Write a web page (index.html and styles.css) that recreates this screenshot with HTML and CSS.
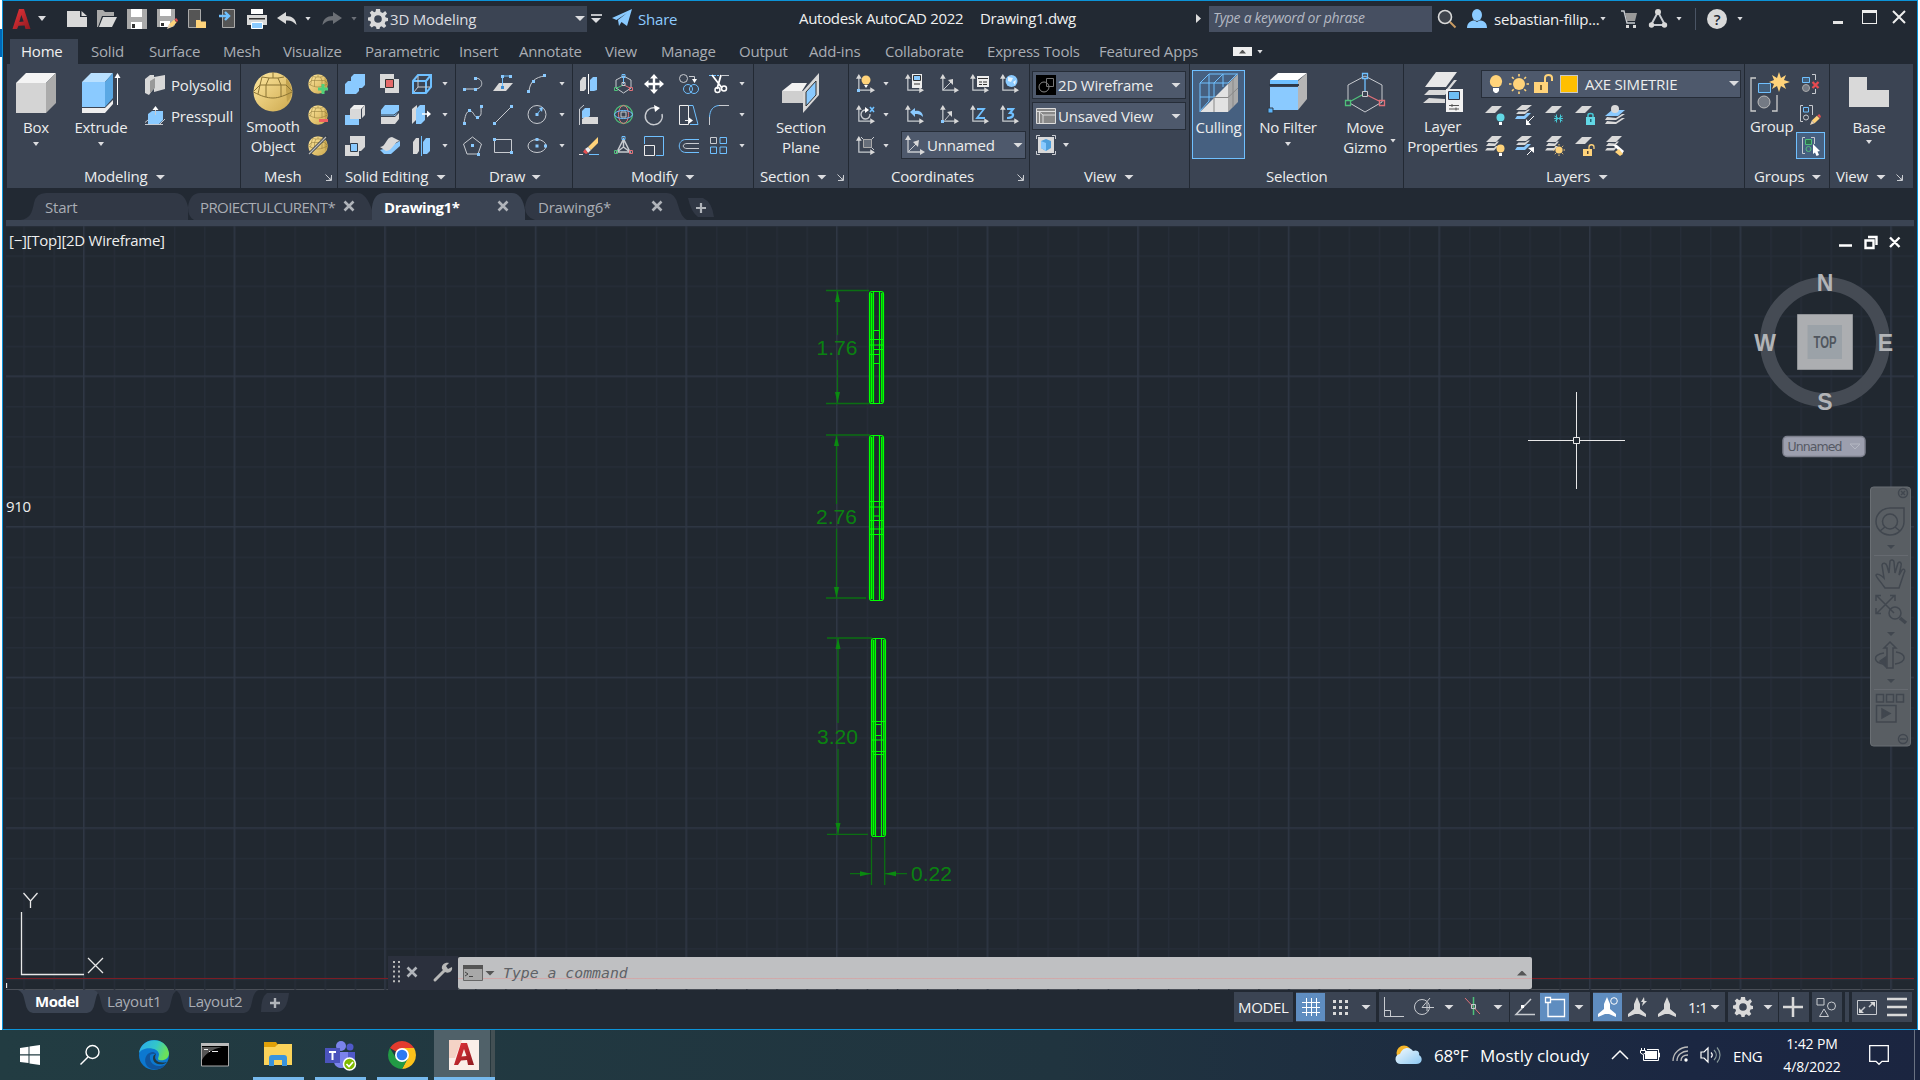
FILE: index.html
```html
<!DOCTYPE html>
<html lang="en">
<head>
<meta charset="utf-8">
<title>Autodesk AutoCAD 2022 - Drawing1.dwg</title>
<link rel="stylesheet" href="styles.css">
</head>
<body>
<svg class="defs" width="0" height="0">
  <defs>
    <linearGradient id="gold" x1="0" y1="0" x2="1" y2="1"><stop offset="0" stop-color="#ffe8a0"/><stop offset="1" stop-color="#cda94e"/></linearGradient>
    <linearGradient id="red" x1="0" y1="0" x2="1" y2="1"><stop offset="0" stop-color="#e8343a"/><stop offset="1" stop-color="#8f1a20"/></linearGradient>
    <linearGradient id="edgeA" x1="0" y1="0" x2="1" y2="0.3"><stop offset="0" stop-color="#2aa8ee"/><stop offset=".6" stop-color="#33c6c9"/><stop offset="1" stop-color="#6be05a"/></linearGradient>
    <linearGradient id="cloud" x1="0" y1="0" x2="1" y2="1"><stop offset="0" stop-color="#f4fbff"/><stop offset="1" stop-color="#8cc8f2"/></linearGradient>
    <symbol id="axis" viewBox="0 0 20 20"><path class="sw" stroke-width="1.3" d="M3 3V17H17"/><path class="fw" d="M0 5L3 0L6 5zM15 14L20 17L15 20z"/></symbol>
    <symbol id="sheet" viewBox="0 0 20 20"><path class="fw" d="M7 1H17L10 8H0z"/></symbol>
    <symbol id="sheets" viewBox="0 0 20 20"><path class="fw" d="M7 0H17L11 6H1zM3.500 7L1 10H10L14 5.500H12L10 7.500zM2 12L0 14.500H9L13 10H11L9 12z"/></symbol>
    <symbol id="sheets-blue" viewBox="0 0 20 20"><path class="fw" d="M7 0H17L11 5H1zM3.500 6.500L1 9H10L15 4.500H13L10 6.500z"/><path class="fb" d="M2 11L0 14H10L16 8H12L9 11z"/></symbol>
    <symbol id="ball" viewBox="0 0 40 40"><circle cx="20" cy="20" r="19.500" fill="url(#gold)"/><path fill="#c2a24e" d="M33 6C40 13 41 24 34 30L33 18z"/><path fill="none" stroke="#8b7434" stroke-width="1" d="M1 19L7 13H33L39 19M0.500 20C8 24 14 26 20 26S33 23 39 20M9 5L16 6H25L31 5M16 6L13 13V25M25 6L28 13V25M9 5L7 13L5 22M20 0V6"/></symbol>
    <symbol id="bulb" viewBox="0 0 14 20"><path class="fy" d="M7 1A6.500 6.500 0 0 1 10 13H4A6.500 6.500 0 0 1 7 1z"/><path fill="#fff" d="M4 14H10V17L8 19H6L4 17z"/></symbol>
    <symbol id="sun" viewBox="0 0 20 20"><circle class="fy" cx="10" cy="10" r="6"/><path class="sy" stroke-width="1.600" d="M10 0V2.500M10 17.500V20M0 10H2.500M17.500 10H20M3 3L4.700 4.700M15.300 15.300L17 17M17 3L15.300 4.700M4.700 15.300L3 17"/></symbol>
    <symbol id="gear" viewBox="0 0 20 20"><path class="fw" fill-rule="evenodd" d="M8 0H12L12.500 3L14.800 4L17.200 2L19 4.500L17 7L17.800 8.500L20 9V12L17.500 12.500L16.700 14.500L18.300 17L16 19L13.500 17.200L12 18L11.500 20H8.500L8 17.800L6 17L3.700 18.500L1.500 16.200L3 13.800L2.400 12L0 11.500V8.500L2.500 8L3.300 6L1.700 3.700L4 1.500L6.200 3.200L7.600 2.600zM10 6.200A3.800 3.800 0 1 0 10 13.800A3.800 3.800 0 1 0 10 6.200z"/></symbol>
    <symbol id="launch" viewBox="0 0 7 7"><path class="sw" d="M.5 .5L6 6M6.500 1V6.500H1M6 3.500V6H3.500"/></symbol>
    <symbol id="x" viewBox="0 0 12 12"><path fill="none" stroke="#b0b4ba" stroke-width="2.600" d="M1.500 1.500L10.500 10.500M10.500 1.500L1.500 10.500"/></symbol>
    <symbol id="pencil" viewBox="0 0 12 12"><path class="fy" d="M2 7L7.500 2L10.500 5L5 10z"/><path fill="#e05050" d="M8 1.500L10 0L12 2.500L11 4.500z"/><path fill="#e8d0b0" d="M2 7L0 12L5 10z"/></symbol>
  </defs>
</svg>
<div class="screen">
<div class="window">

  <header class="titlebar">
    <svg class="i" viewBox="0 0 20 20"><path fill="url(#red)" d="M6 0H11L17.500 20H12.500L11.600 16.500L5.500 16.800L4 20H-.5zM8.300 6L6.300 13L10.700 12.600z"/></svg>
    <i class="caret mid"></i>
    <svg class="i" viewBox="0 0 20 20"><path class="fw" d="M0 2H13V8H20V18H0zM14.500 2L20 7H14.500z"/></svg>
    <svg class="i" viewBox="0 0 20 20"><path fill="#aaa" d="M0 1H6L8 3H17V7H5L1 18H0z"/><path class="fw" d="M6 8H20L15 18H2z"/></svg>
    <svg class="i" viewBox="0 0 20 20"><path fill="#aaa" d="M0 0H20V20H0z"/><path fill="#fff" d="M4 0H15V8H4zM4 13H15V20H4z"/><path fill="#333" d="M5 15H8V19H5z"/></svg>
    <svg class="i" viewBox="0 0 20 20"><path fill="#aaa" d="M0 0H18V16L16 18H0z"/><path fill="#fff" d="M3 0H14V7H3zM3 12H13V18H3z"/><path fill="#333" d="M4 14H7V17H4z"/><use href="#pencil" x="10" y="9" width="11" height="11"/></svg>
    <svg class="i" viewBox="0 0 20 20"><path fill="#555" stroke="#aaa" d="M1.500 .5H13.500V18.500H1.500z"/><path class="fy" d="M9 11H13L14 12.500H19V19H9z"/></svg>
    <svg class="i" viewBox="0 0 20 20"><path fill="#555" stroke="#aaa" d="M4.500 .5H16.500V18.500H4.500z"/><path class="sb" stroke-width="2.400" d="M1 7H10M7 3L11 7L7 11"/></svg>
    <svg class="i" viewBox="0 0 20 20"><path fill="#fff" d="M4 0H16V5H4z"/><path class="fw" d="M0 6H20V16H0z"/><path fill="#333" d="M2 9H18V10.500H2z"/><path class="fb" stroke="#fff" d="M4.500 13.500H15.500V19.500H4.500z"/></svg>
    <svg class="i" viewBox="0 0 20 20"><path class="fw" d="M0 9L9 3V7C15 7 19 10 19.500 16C16 12 13 11 9 11.500V15z"/></svg>
    <i class="caret small"></i>
    <svg class="i dim" viewBox="0 0 20 20"><path class="fw" d="M20 9L11 3V7C5 7 1 10 .5 16C4 12 7 11 11 11.500V15z"/></svg>
    <i class="caret small dim"></i>
    <div class="workspace"><svg class="i" viewBox="0 0 20 20"><use href="#gear"/></svg><span>3D Modeling</span><i class="caret"></i></div>
    <div class="customize"><i class="caret"></i></div>
    <svg class="i" viewBox="0 0 20 20"><path class="fb" d="M0 9L20 0L15 17L9.500 13L7 17L6 11L15 4L4.500 11z"/></svg>
    <span class="share">Share</span>
    <span class="bright app-name">Autodesk AutoCAD 2022</span>
    <span class="bright doc-name">Drawing1.dwg</span>
    <i class="play"></i>
    <div class="search">Type a keyword or phrase</div>
    <svg class="i" viewBox="0 0 20 20"><circle cx="8" cy="8" r="6.500" fill="#3f444c" stroke="#d9d9d9" stroke-width="1.600"/><path stroke="#c89a62" stroke-width="2" d="M13 13L18.500 18.500"/></svg>
    <svg class="i" viewBox="0 0 20 20"><ellipse class="fb" cx="10" cy="6" rx="5" ry="6"/><path class="fb" d="M0 19C0 13 5 11.500 7.500 11.500L10 13L12.500 11.500C16 11.500 20 13 20 19z"/></svg>
    <span class="bright user">sebastian-filip...</span>
    <i class="caret small"></i>
    <svg class="i" viewBox="0 0 20 20"><path class="sw" stroke-width="1.400" d="M1 2H4L7 14H15"/><path fill="#999" d="M5 4H17L15 12H7z"/><path class="fw" d="M6 16H9V19H6zM13 16H16V19H13z"/></svg>
    <svg class="i" viewBox="0 0 20 20"><path class="sw" stroke-width="2" d="M10 3L3 16H17z"/><circle class="fw" cx="10" cy="3" r="3"/><circle class="fw" cx="3.500" cy="16" r="2.700"/><circle class="fw" cx="16.500" cy="16" r="2.700"/></svg>
    <i class="caret small"></i>
    <i class="divider"></i>
    <div class="help">?</div>
    <i class="caret small"></i>
    <i class="min"></i>
    <i class="max"></i>
    <svg class="close" viewBox="0 0 14 14"><path stroke="#eee" stroke-width="2" d="M1 1L13 13M13 1L1 13"/></svg>
  </header>

  <nav class="menu">
    <a class="on">Home</a><a>Solid</a><a>Surface</a><a>Mesh</a><a>Visualize</a><a>Parametric</a><a>Insert</a><a>Annotate</a><a>View</a><a>Manage</a><a>Output</a><a>Add-ins</a><a>Collaborate</a><a>Express Tools</a><a>Featured Apps</a>
    <b class="minimize"><i></i></b><i class="caret small"></i>
  </nav>

  <section class="ribbon">
    <div class="panel p-modeling">
      <div class="body">
        <div class="big"><svg viewBox="0 0 40 40"><path fill="#d4d4d4" d="M0 10H30V40H0z"/><path fill="#f4f4f4" d="M0 10L10 0H40L30 10z"/><path fill="#ababab" d="M30 10L40 0V30L30 40z"/></svg><span>Box</span><i class="caret small"></i></div>
        <div class="big"><svg viewBox="0 0 40 40"><path class="fb" d="M1 9H24V34H1z"/><path fill="#b9e0ff" d="M1 9L10 0H32L24 9z"/><path fill="#5aa8e4" d="M24 9L32 0V25L24 34z"/><path fill="#eee" d="M1 35H24L32 27V31L24 40H1z"/><path fill="none" stroke="#fff" d="M36.500 2V32"/><path fill="#fff" d="M33.500 5L36.500 0L39.500 5z"/></svg><span>Extrude</span><i class="caret small"></i></div>
        <div class="wide">
          <div><svg class="i" viewBox="0 0 20 20"><path fill="#d8d8d8" d="M0 4L5 0H9V13L4 20L0 18zM9 2L20 0V14L9 17z"/><path fill="#999" d="M5 6L10 3V13L5 18z"/></svg><span>Polysolid</span></div>
          <div><svg class="i" viewBox="0 0 20 20"><path class="fb" d="M3 8L7 5H18V14L14 18H3z"/><path class="sw" d="M0 18.500H18M0 16.500L3 14M15 18L20 13M10.500 9V1"/><path fill="#fff" d="M7.500 4L10.500 0L13.500 4z"/></svg><span>Presspull</span></div>
        </div>
      </div>
      <h2>Modeling<i class="caret"></i></h2>
    </div>

    <div class="panel p-mesh">
      <div class="body">
        <div class="big tight"><svg viewBox="0 0 40 40"><use href="#ball"/></svg><span>Smooth<br>Object</span></div>
        <div class="tools">
          <svg class="i" viewBox="0 0 20 20"><use href="#ball"/><path stroke="#4fd07a" stroke-width="3" d="M10 15H20M15 10V20"/></svg>
          <svg class="i" viewBox="0 0 20 20"><use href="#ball"/><path stroke="#f06060" stroke-width="3" d="M11 15.500H20"/></svg>
          <svg class="i" viewBox="0 0 20 20"><use href="#ball"/><path stroke="#333c48" stroke-width="3" d="M1 18L19 0"/><path stroke="#bbb" stroke-width="1.200" d="M1 18L18 1"/></svg>
        </div>
      </div>
      <h2>Mesh<svg class="launch"><use href="#launch"/></svg></h2>
    </div>

    <div class="panel p-solid">
      <div class="body"><div class="tools">
        <svg class="i" viewBox="0 0 20 20"><path class="fb" d="M0 10L3 7H6V3L9 0H20V11L17 14H14V17L11 20H0z"/></svg>
        <svg class="i" viewBox="0 0 20 20"><path class="fw" d="M0 0H14V5H19V19H5V14H0z"/><path fill="#e46a6a" stroke="#333" d="M5.500 5.500H13.500V13.500H5.500z"/></svg>
        <svg class="i" viewBox="0 0 20 20"><path class="sb" stroke-width="2" d="M1 7L6 1H19V13L14 19H1zM1 7H14V19M14 7L19 1"/><path class="sw" d="M6 2V13H18M6 13L2 18"/></svg><i class="caret small"></i>
        <svg class="i" viewBox="0 0 20 20"><path class="fb" d="M0 10H5V14H14V20H0z"/><path fill="#eee" d="M5 4L9 0H20L16 4z"/><path class="fw" d="M5 4H16V14H5zM17 4L20 0V10L17 13z"/></svg>
        <svg class="i" viewBox="0 0 20 20"><path class="fb" d="M1 5L5 0H19V6L15 11H1z"/><path stroke="#333c48" d="M1 10H14L19 6" fill="none"/><path class="fw" d="M1 12H15L19 8V14L15 19H1z"/></svg>
        <svg class="i" viewBox="0 0 20 20"><path class="fw" d="M0 4L5 0V14L0 19z"/><path class="fb" d="M4 4L8 0H13V15L9 19H4z"/><path stroke="#fff" stroke-width="1.500" d="M10 9H17"/><path fill="#fff" d="M15 5.500L19 9L15 12.500z"/></svg><i class="caret small"></i>
        <svg class="i" viewBox="0 0 20 20"><path class="fw" d="M5 0H20V11L16 15H14V20H0V9H5z"/><path class="fb" stroke="#333c48" d="M5.500 7.500H12.500V15.500H5.500z"/></svg>
        <svg class="i" viewBox="0 0 20 20"><path class="fb" d="M0 14L7 12L20 5V10L11 18L4 18z"/><path class="fw" d="M0 11C6 11 6 1 12 1L20 5C14 5 13 15 6 15z"/></svg>
        <svg class="i" viewBox="0 0 20 20"><path class="fw" d="M1 6L4 2H7V15L5 18H1z"/><path class="sb" d="M9.500 0V20"/><path class="fb" d="M11 6L14 2H18V15L15 18H11z"/></svg><i class="caret small"></i>
      </div></div>
      <h2>Solid Editing<i class="caret"></i></h2>
    </div>

    <div class="panel p-draw">
      <div class="body"><div class="tools">
        <svg class="i" viewBox="0 0 20 20"><path class="sw" d="M2 15H12M12 4C21 4 21 15 12 15"/><path class="fb" d="M0 14H3V17H0zM11 3H14V6H11zM11 14H14V17H11z"/></svg>
        <svg class="i" viewBox="0 0 20 20"><path class="fw" d="M6 9H20L13 17H0z"/><path class="sb" d="M9.500 13V2H18"/><path class="fb" d="M8 1H11V4H8zM16 1H19V4H16z"/><path fill="#3b8bd0" d="M8 12H11V15H8z"/></svg>
        <svg class="i" viewBox="0 0 20 20"><path class="sw" d="M2 17C3 8 8 3 18 2"/><path class="fb" d="M0 16H3V19H0zM5 6H8V9H5zM16 0H19V3H16z"/></svg><i class="caret small"></i>
        <svg class="i" viewBox="0 0 20 20"><path class="sw" d="M1 18C2 12 3 6 7 6S11 13 15 12S18 8 18 2"/><path class="fb" d="M0 17H3V20H0zM5 4H8V7H5zM13 11H16V14H13zM17 0H20V3H17z"/></svg>
        <svg class="i" viewBox="0 0 20 20"><path class="sw" d="M2 18L18 2"/><path class="fb" d="M0 17H3V20H0zM17 0H20V3H17z"/></svg>
        <svg class="i" viewBox="0 0 20 20"><circle class="sw" cx="10" cy="9.500" r="9"/><path class="fb" d="M8.500 8H11.500V11H8.500zM12 3L16 2L15 7z"/><path class="sb" d="M10 9L14 4.500"/></svg><i class="caret small"></i>
        <svg class="i" viewBox="0 0 20 20"><path class="sw" d="M9.500 1L18.500 8L15 18H4L.5 8z"/><path class="fb" d="M8 8H11V11H8zM14 17H17V20H14z"/></svg>
        <svg class="i" viewBox="0 0 20 20"><path class="sw" d="M1.500 3.500H18.500V16.500H1.500z"/><path class="fb" d="M0 2H3V5H0zM17 15H20V18H17z"/></svg>
        <svg class="i" viewBox="0 0 20 20"><ellipse class="sw" cx="10" cy="10" rx="9" ry="6.500"/><path class="fb" d="M8.500 2H11.500V5H8.500zM8.500 8.500H11.500V11.500H8.500zM17 8.500H20V11.500H17z"/></svg><i class="caret small"></i>
      </div></div>
      <h2>Draw<i class="caret"></i></h2>
    </div>

    <div class="panel p-modify">
      <div class="body"><div class="tools">
        <svg class="i" viewBox="0 0 20 20"><path class="fw" d="M1 7L4 3H7V15L5 17H1z"/><path stroke="#fff" d="M9.500 0V20"/><path class="fb" d="M11 6L14 3H18V16L15 17H11z"/></svg>
        <svg class="i" viewBox="0 0 20 20"><path class="sw" d="M9.500 2L17 6V14L9.500 19L2 14V6z"/><path class="sb" d="M9.500 2V10M8 .5H11V3.500H8z"/><path stroke="#4fc07a" fill="none" d="M9 11L3 14M.5 13.500H3.500V16.500H.5z"/><path class="sr" d="M10 11L16 14M15.500 13.500H18.500V16.500H15.500z"/><path class="sw" d="M8 8.500H11V11.500H8z"/></svg>
        <svg class="i" viewBox="0 0 20 20"><path fill="#fff" d="M10 0L14 4.500H11.200V8.800H15.500V6L20 10L15.500 14V11.200H11.200V15.500H14L10 20L6 15.500H8.800V11.200H4.500V14L0 10L4.500 6V8.800H8.800V4.500H6z"/></svg>
        <svg class="i" viewBox="0 0 20 20"><circle class="sw" cx="4.500" cy="4.500" r="4"/><path class="sw" d="M10 2.500H15.500V6"/><path fill="#fff" d="M13 5H18L15.500 9z"/><circle class="sb" cx="9" cy="15" r="4.500"/><circle class="sb" cx="15" cy="15" r="4.500"/></svg>
        <svg class="i" viewBox="0 0 20 20"><path class="sb" stroke-dasharray="3 1" d="M0 1.500H10"/><path class="sw" d="M13 1.500H20"/><path stroke="#fff" stroke-width="1.800" fill="none" d="M3 1L13 14M12 1L8 15"/><circle cx="8.500" cy="16" r="2.500" stroke="#fff" stroke-width="1.500" fill="none"/><circle cx="15" cy="14.500" r="2.500" stroke="#fff" stroke-width="1.500" fill="none"/></svg><i class="caret small"></i>
        <svg class="i" viewBox="0 0 20 20"><path class="sw" d="M.5 20V4L5 0"/><path class="fb" d="M3 6L6 3H11V11L8 13H3z"/><path class="fw" d="M3 14L6 12H19V19H3z"/></svg>
        <svg class="i" viewBox="0 0 20 20"><circle cx="9.500" cy="9.500" r="9" fill="none" stroke="#4fc07a" stroke-width="1.300"/><ellipse class="sr" cx="9.500" cy="9.500" rx="5" ry="9"/><ellipse class="sb" cx="9.500" cy="9.500" rx="9" ry="4"/><path class="sw" d="M7 7H12V12H7z"/></svg>
        <svg class="i" viewBox="0 0 20 20"><path class="sw" stroke-width="1.400" d="M12 3A8.500 8.500 0 1 0 18 9"/><path fill="#fff" d="M10 0L16 3L11 7z"/></svg>
        <svg class="i" viewBox="0 0 20 20"><path stroke="#eee" fill="none" d="M.5 .5H9.500V19.500H.5zM6 15.500H11"/><path fill="#fff" d="M10 12.500L14 15.500L10 18.500z"/><path class="sb" d="M10 .5H14L19 19.500H11"/></svg>
        <svg class="i" viewBox="0 0 20 20"><path class="sb" d="M.5 12C1 5 4 1 10 .5"/><path class="sw" d="M10 .5H20M.5 12V20"/></svg><i class="caret small"></i>
        <svg class="i" viewBox="0 0 20 20"><path class="fy" d="M9 11L19 1V7L12 14z"/><path fill="#eee" d="M6 13L9 11L12 14L9 17z"/><path fill="#e85050" d="M4 16L6 13L9 17L7 18z"/><path stroke="#ddd" d="M0 18.500H4"/><path class="sb" d="M10 18.500H20"/></svg>
        <svg class="i" viewBox="0 0 20 20"><path class="sw" stroke-width="1.500" d="M9.500 3L3 16H16zM9.500 3V11L3 16M9.500 11L16 16"/><path class="sb" d="M8 .5H11V3.500H8z"/><path stroke="#4fc07a" fill="none" d="M.5 14.500H3.500V17.500H.5z"/><path class="sr" d="M15.500 14.500H18.500V17.500H15.500z"/></svg>
        <svg class="i" viewBox="0 0 20 20"><path class="sb" d="M.5 8V.5H19.500V19.500H12"/><path stroke="#eee" fill="none" d="M.5 9.500H10.500V19.500H.5z"/></svg>
        <svg class="i" viewBox="0 0 20 20"><path class="sb" d="M20 3.500H7C-2 3.500 -2 16.500 7 16.500H20"/><path class="sw" d="M20 7.500H8C3 7.500 3 12.500 8 12.500H20"/></svg>
        <svg class="i" viewBox="0 0 20 20"><path class="sw" d="M1.500 1.500H7.500V7.500H1.500z"/><path class="sb" d="M11 1.500H17.500V7.500H11zM1.500 11H7.500V17.500H1.500zM11 11H17.500V17.500H11z"/></svg><i class="caret small"></i>
      </div></div>
      <h2>Modify<i class="caret"></i></h2>
    </div>

    <div class="panel p-section">
      <div class="body"><div class="big"><svg viewBox="0 0 40 40"><path fill="#f2f2f2" d="M1 18L11 10H26L21 18z"/><path fill="#cfcfcf" d="M1 18H22V30H1z"/><path fill="#d8d8d8" d="M22 18L38 0V22L22 40z"/><path class="fb" stroke="#333" d="M25 19L35 8V22L25 33z"/></svg><span>Section<br>Plane</span></div></div>
      <h2>Section<i class="caret"></i><svg class="launch"><use href="#launch"/></svg></h2>
    </div>

    <div class="panel p-coords">
      <div class="body"><div class="tools">
        <svg class="i" viewBox="0 0 20 20"><use href="#axis" width="19" height="19"/><circle class="fy" cx="10" cy="6" r="4.500"/><path fill="#fff" d="M8 11H12L10 14z"/><path class="fb" d="M1 15H4V18H1z"/></svg><i class="caret small"></i>
        <svg class="i" viewBox="0 0 20 20"><use href="#axis" width="19" height="19"/><path fill="#eee" d="M7 0H17V14H7z"/><path class="fb" stroke="#333" d="M8.500 1.500H15.500V6.500H8.500z"/><path stroke="#333" d="M9 10H15"/></svg>
        <svg class="i" viewBox="0 0 20 20"><use href="#axis" width="19" height="19"/><path class="sw" d="M3 16L12 7"/><path class="fw" d="M13 5L13 11L8 6z"/></svg>
        <svg class="i" viewBox="0 0 20 20"><use href="#axis" width="19" height="19"/><path fill="#eee" d="M7 2H19V13H7z"/><path stroke="#333" d="M8 4.500H18M9 8H12M9 10.500H12M13 8H17M13 10.500H17"/></svg>
        <svg class="i" viewBox="0 0 20 20"><use href="#axis" width="19" height="19"/><circle class="fb" cx="11.500" cy="7" r="6"/><path fill="#e8f6ff" d="M8 3L13 4L11 8L8 7zM13 8L16 6L15 11z"/></svg>
        <svg class="i" viewBox="0 0 20 20"><use href="#axis" width="19" height="19"/><path class="sw" stroke-width="1.400" d="M10 5A4.500 4.500 0 1 0 14 9"/><path fill="#fff" d="M9 2L13 5L9 8z"/><path class="sb" stroke-width="1.600" d="M14 2L18 7M18 2L14 7"/></svg><i class="caret small"></i>
        <svg class="i" viewBox="0 0 20 20"><use href="#axis" width="19" height="19"/><path class="fb" d="M5 7L10 3V6C15 5 18 8 18 12C15 9 13 9 10 9V12z"/></svg>
        <svg class="i" viewBox="0 0 20 20"><use href="#axis" width="19" height="19"/><path class="sw" d="M5 15L11 8"/><path class="fw" d="M12 6L12 12L7 7z"/><path class="fb" d="M1 15H4V18H1z"/></svg>
        <svg class="i" viewBox="0 0 20 20"><use href="#axis" width="19" height="19"/><path class="sb" stroke-width="1.800" d="M7 4H14L7 13H15"/></svg>
        <svg class="i" viewBox="0 0 20 20"><use href="#axis" width="19" height="19"/><path class="sb" stroke-width="2.200" d="M7 4H13L10 8C15 8 14 13 7 13"/></svg>
        <svg class="i" viewBox="0 0 20 20"><use href="#axis" width="19" height="19"/><path fill="#666e7a" stroke="#aaa" d="M7.500 3.500H15.500V11.500H7.500z"/><path class="sw" d="M5 1L7.500 3.500M18 1L15.500 3.500M18 14L15.500 11.500"/></svg><i class="caret small"></i>
        <div class="combo"><svg class="i" viewBox="0 0 20 20"><use href="#axis"/><path class="sw" d="M4 16L12 8"/><path class="fw" d="M14 5L13 12L8 7z"/></svg><span>Unnamed</span><i class="caret"></i></div>
      </div></div>
      <h2>Coordinates<svg class="launch"><use href="#launch"/></svg></h2>
    </div>

    <div class="panel p-view">
      <div class="body">
        <div class="combo"><svg class="i" viewBox="0 0 20 20"><path d="M0 0H20V20H0z"/><circle cx="8" cy="12" r="5" fill="none" stroke="#888"/><path fill="none" stroke="#777" d="M10.500 3.500H17.500V11.500H10.500z"/></svg><span class="wire">2D Wireframe</span><i class="caret"></i></div>
        <div class="combo"><svg class="i" viewBox="0 0 20 20"><path fill="#888" stroke="#ddd" d="M.5 2.500H19.500V17.500H.5zM.5 5.500H19.500M3.500 17V6M3.500 6L7 9V17M7 9H19"/></svg><span>Unsaved View</span><i class="caret"></i></div>
        <div class="row"><svg class="i" viewBox="0 0 20 20"><path class="fw" d="M2 2H18V18H2z"/><path class="sw" d="M.5 4V.5H4M16 .5H19.500V4M.5 16V19.500H4M16 19.500H19.500V16"/><path fill="#4f9fdc" d="M5 6L10 4L15 6V13L10 16L5 13z"/><path class="fb" d="M5 6L10 8V16L5 13z"/></svg><i class="caret small"></i></div>
      </div>
      <h2>View<i class="caret"></i></h2>
    </div>

    <div class="panel p-selection">
      <div class="body">
        <div class="big active"><svg viewBox="0 0 40 40"><path fill="#e2e2e2" d="M1 39L29 11V39z"/><path fill="#aaa" d="M29 11L39 1V29L29 39z"/><path class="sb" d="M1 39V10L10 1H39M1 10H29M1 24H16M15 10V24M10 1V28M24 1V14M15 10L24 1M29 10L38 1M1 38L10 28"/><path stroke="#888" d="M15 24V39M15 24.500H29L39 15M34 6V34" fill="none"/></svg><span>Culling</span></div>
        <div class="big"><svg viewBox="0 0 40 40"><path fill="#fff" d="M2 7L10 0H39L30 7z"/><path fill="#b5b5b5" d="M30 8L39 0V26L30 37z"/><path fill="#6fc0ff" d="M2 7H30V11H2z"/><path class="fb" d="M2 14H30V37H2z"/><path fill="#2e3947" d="M1 11H31V13H1z"/><path fill="#5bb4fa" stroke="#333c48" d="M0 35H5V40H0z"/></svg><span>No Filter</span><i class="caret small"></i></div>
        <div class="gizmo"><div class="big"><svg viewBox="0 0 40 40"><path class="sw" stroke="#aaa" d="M20 3L37 12V29L20 39L3 29V12z"/><path class="sb" stroke-width="1.300" d="M20 6V18M17.500 .5H22.500V5.500H17.500z"/><path stroke="#4fc07a" fill="#3b4453" stroke-width="1.300" d="M17 22L6 28M.5 27.500H5.500V32.500H.5z"/><path class="sr" stroke-width="1.300" d="M22 22L34 28M34.500 27.500H39.500V32.500H34.500z"/><path class="sw" d="M17.500 18.500H22.500V23.500H17.500z"/></svg><span>Move<br>Gizmo</span></div><i class="caret small"></i></div>
      </div>
      <h2>Selection</h2>
    </div>

    <div class="panel p-layers">
      <div class="body">
        <div class="big tight"><svg viewBox="0 0 40 40"><path fill="#e8e8e8" d="M13 0H34L23 15H2z"/><path class="fw" d="M6 18L1 23H22L34 8H31L23 18zM6 26L0 31H22V27z"/><path fill="#f2f2f2" d="M23 17H40V40H23z"/><path fill="#6fbdf5" stroke="#334" d="M25.500 19.500H36.500V27.500H25.500z"/><path stroke="#555" d="M26 33.500H36M26 37H36M29 32V35M33 35.500V38.500"/></svg><span>Layer<br>Properties</span></div>
        <div class="layer-col">
          <div class="combo"><svg class="bulb"><use href="#bulb"/></svg><svg class="i"><use href="#sun"/></svg><svg class="i" viewBox="0 0 20 20"><path class="fy" d="M0 8H14V19H0z"/><path class="sy" stroke-width="2" d="M11 8V4C11 0 18 0 18 4V7"/><path fill="#7d6534" d="M6 11H8V16H6z"/></svg><b class="swatch"></b><span>AXE SIMETRIE</span><i class="caret"></i></div>
          <div class="tools">
            <svg class="i" viewBox="0 0 20 20"><use href="#sheet"/><circle class="fc" cx="15.500" cy="12.500" r="4"/><path fill="#fff" d="M14 17H17V20H14z"/></svg>
            <svg class="i" viewBox="0 0 20 20"><use href="#sheets-blue"/><path stroke="#fff" fill="none" d="M19 11L12 18"/><path fill="#fff" d="M11 14V20H16z"/></svg>
            <svg class="i" viewBox="0 0 20 20"><use href="#sheet"/><path class="sc" d="M11.500 9.500V17.500M15.500 9.500V17.500M9 13.500H18M9.500 11L17.500 16M17.500 11L9.500 16"/></svg>
            <svg class="i" viewBox="0 0 20 20"><use href="#sheet"/><path class="fc" d="M11 12H20V20H11z"/><path class="sc" stroke-width="1.500" d="M13 12V10C13 8 18 8 18 10V12"/><path fill="#267" d="M15 14H16.500V17H15z"/></svg>
            <svg class="i" viewBox="0 0 20 20"><path class="fb" d="M7 5H20L13 11H0z"/><path class="fw" d="M2 12L0 15H11L20 9H17L11 13zM2 16L0 19H11L20 13H17L11 17z"/><circle class="fw" cx="10" cy="4" r="4"/></svg>
            <svg class="i" viewBox="0 0 20 20"><use href="#sheets"/><circle class="fy" cx="15.500" cy="12.500" r="4"/><path fill="#fff" d="M14 17H17V20H14z"/></svg>
            <svg class="i" viewBox="0 0 20 20"><use href="#sheets-blue"/><path stroke="#fff" fill="none" d="M12 19L18 13"/><path fill="#fff" d="M19 11V17L13 12z"/></svg>
            <svg class="i" viewBox="0 0 20 20"><use href="#sheets"/><use href="#sun" x="8" y="8" width="12" height="12"/></svg>
            <svg class="i" viewBox="0 0 20 20"><use href="#sheet"/><path class="fy" d="M8 13H17V20H8z"/><path class="sy" stroke-width="1.300" d="M14 13V11C14 8 19 8 19 11V13"/><path fill="#543" d="M12 15H13.500V18H12z"/></svg>
            <svg class="i" viewBox="0 0 20 20"><use href="#sheets"/><path fill="#fff" d="M8 9H12L19 15L17 18L12 13z"/><path class="fy" d="M10 16L14 13L18 18L15 20z"/></svg>
          </div>
        </div>
      </div>
      <h2>Layers<i class="caret"></i></h2>
    </div>

    <div class="panel p-groups">
      <div class="body">
        <div class="big tight"><svg viewBox="0 0 40 40"><path fill="none" stroke="#ccc" stroke-width="1.300" d="M6 6H1V39H6M22 39H27V23"/><path fill="#44607c" stroke="#6fc0ff" d="M8.500 11.500H20.500V20.500H8.500z"/><circle cx="14" cy="30" r="6" fill="#747a84" stroke="#bbb"/><path class="fy" d="M29 0L31 6L36 3L34 8L40 10L34 12L36 17L31 14L29 20L27 14L22 17L24 12L19 10L24 8L22 3L27 6z"/></svg><span>Group</span></div>
        <div class="tools">
          <svg class="i" viewBox="0 0 20 20"><path fill="#44607c" stroke="#6fc0ff" d="M2.500 3.500H9.500V8.500H2.500z"/><circle cx="6" cy="14" r="3.500" fill="#747a84" stroke="#aaa"/><path class="sw" d="M12 .5H15.500V6M15.500 15V19.500H12"/><path stroke="#e84a50" stroke-width="2.300" d="M12.500 8L18.500 14M18.500 8L12.500 14"/></svg>
          <svg class="i" viewBox="0 0 20 20"><path class="sw" d="M3 .5H.5V16.500H3M9 .5H12.500V10"/><path class="sb" d="M3.500 2.500H8.500V7H3.500z"/><circle class="sw" cx="6" cy="12.500" r="2.500"/><use href="#pencil" x="10" y="9" width="11" height="11"/></svg>
          <b class="active"><svg class="i" viewBox="0 0 20 20"><path class="sw" d="M4 1.500H1.500V17.500H4M10 1.500H13.500V8"/><path fill="#2f6b50" stroke="#4fc07a" d="M4.500 3.500H10.500V8.500H4.500z"/><circle cx="7.500" cy="13" r="2.500" fill="none" stroke="#4fc07a"/><path fill="#fff" d="M12 8L19 15L16.500 15.500L18 19L15.500 20L14 16.500L12 18z"/></svg></b>
        </div>
      </div>
      <h2>Groups<i class="caret"></i></h2>
    </div>

    <div class="panel p-base">
      <div class="body"><div class="big"><svg viewBox="0 0 40 40"><path class="fw" d="M0 4H18V17H40V34H0z"/></svg><span>Base</span><i class="caret small"></i></div></div>
      <h2>View<i class="caret"></i><svg class="launch"><use href="#launch"/></svg></h2>
    </div>
  </section>

  <div class="files">
    <div class="file f1"><span>Start</span></div>
    <div class="file f2"><span>PROIECTULCURENT*</span><svg><use href="#x"/></svg></div>
    <div class="file f3 on"><span>Drawing1*</span><svg><use href="#x"/></svg></div>
    <div class="file f4"><span>Drawing6*</span><svg><use href="#x"/></svg></div>
    <div class="file add"><svg viewBox="0 0 10 10"><path stroke="#b0b4ba" stroke-width="2.200" d="M5 0V10M0 5H10"/></svg></div>
  </div>

  <main class="canvas">
    <svg class="drawing" viewBox="6 226 1908 764">
      <defs>
        <pattern id="minor" x="83.600" y="375.900" width="30.120" height="30.120" patternUnits="userSpaceOnUse"><path fill="none" stroke="#262d38" stroke-width="1.300" d="M.7 0V30.120M0 .7H30.120"/></pattern>
        <pattern id="major" x="83" y="375.500" width="150.600" height="150.600" patternUnits="userSpaceOnUse"><path fill="none" stroke="#2f3745" stroke-width="1.300" d="M.7 0V150.600M0 .7H150.600"/></pattern>
      </defs>
      <path fill="url(#minor)" d="M6 226H1914V990H6z"/>
      <path fill="url(#major)" d="M6 226H1914V990H6z"/>
      <path stroke="#7c1d24" d="M6 978.500H1914"/>
      <text class="ui" x="9" y="246" textLength="156">[−][Top][2D Wireframe]</text>
      <text class="ui" x="6" y="512" textLength="25">910</text>

      <g class="dims">
        <path d="M826 290.500H869M826 403.500H876M837.500 291V335M837.500 360V403M826 435H870M826 598H866M836.500 435V504M836.500 529V598M827 638H872M827 834.300H868M838 638V723M838 749V834M871.500 838V885M884.700 838V885M850 873.700H871M885 873.700H907"/>
        <path class="tip" d="M837.500 291L840 302H835zM837.500 403L840 392H835zM836.500 435L839 446H834zM836.500 598L839 587H834zM838 638L840.500 649H835.500zM838 834L840.500 823H835.500zM871 873.700L860 871.200V876.200zM885 873.700L896 871.200V876.200z"/>
        <text x="816.500" y="355">1.76</text><text x="816" y="524">2.76</text><text x="817" y="743.700">3.20</text><text x="911" y="880.700">0.22</text>
      </g>
      <g class="bars">
        <path class="shade" d="M870 293H873V402H870zM881 293H883V402H881zM870 437H873V599H870zM881 437H883V599H881zM872 640H875V835H872zM883 640H885V835H883z"/>
        <rect x="869.500" y="291.500" width="14" height="112" rx="2.500"/><path d="M871.500 293V402M873.500 292V403M879.500 292V403M881.700 293V402M873 330.500H880M869 339.500H884M869 345H884M873 349.500H884M869 354.500H880M873 363.500H880"/>
        <rect x="869.500" y="435.500" width="14" height="165" rx="2.500"/><path d="M871.500 437V599M873.500 436V600M879.500 436V600M881.700 437V599M869 501.500H884M869 507H884M873 516H880M869 520.500H884M869 529H884M869 534.500H884"/>
        <rect x="871.500" y="638.500" width="14" height="198" rx="2.500"/><path d="M873.500 640V835M875.500 639V836M881.500 639V836M883.700 640V835M871 721.500H886M875 724.500H882M875 735.500H882M871 740H884M871 751.500H886M873 754.500H884"/>
      </g>

      <g class="cross"><path d="M1528 440.500H1573M1579 440.500H1625M1576.500 392V437M1576.500 443V489M1573.500 437.500H1579.500V443.500H1573.500z"/></g>
      <g class="ucs"><path d="M21.500 912V974.500H84M23.500 893L30.500 901L37.500 893M30.500 901V908M88 958L103 973M103 958L88 973M6.500 983V988"/></g>

      <g class="mdi"><path d="M1839 245.500H1852M1865.500 240.500H1873.500V248H1865.500zM1868 237H1876.500V245M1890 237.500L1899.500 247M1899.500 237.500L1890 247"/></g>
      <g class="cube">
        <circle cx="1825" cy="342" r="58" fill="none" stroke="#454b54" stroke-width="14"/>
        <path fill="#acaeb1" stroke="#8f9296" d="M1797.500 314.500H1852.500V369.500H1797.500z"/><path fill="#9ba2a8" d="M1807.500 325H1842V359H1807.500z"/>
        <text class="top" x="1825" y="348" textLength="23" lengthAdjust="spacingAndGlyphs">TOP</text>
        <text x="1825" y="290.500">N</text><text x="1825" y="410">S</text><text x="1765" y="350.500">W</text><text x="1885.500" y="350.500">E</text>
        <rect x="1783" y="436.500" width="82" height="20" rx="4" fill="#9c9fae" stroke="#7c7f8c" stroke-width="1.500"/>
        <text class="pill" x="1787.500" y="451" textLength="55">Unnamed</text><path fill="none" stroke="#b4b7c2" d="M1850 444H1860L1855 449z"/>
      </g>
      <g class="navbar">
        <rect x="1870.500" y="487" width="40" height="259" rx="3" fill="#595e63" stroke="#6a6f74"/>
        <path stroke="#666a70" d="M1874 555.500H1908M1874 689.500H1908"/>
        <g fill="none" stroke="#41474f" stroke-width="1.500">
          <circle cx="1903" cy="493" r="4.500"/><path d="M1901 491L1905 495M1905 491L1901 495"/>
          <path d="M1890 508H1904V522A14 13.500 0 1 1 1890 508z"/><circle cx="1890" cy="521.500" r="7.500"/><path d="M1880 531L1885 527M1900 531L1895 527"/>
          <path fill="#41474f" stroke="none" d="M1887 545H1895L1891 549zM1887 632H1895L1891 636zM1887 679H1895L1891 683z"/>
          <path d="M1885 588C1881 582 1876 577 1876 575C1877 573 1881 575 1884 578L1882 565C1883 562 1886 563 1887 566L1889 573L1890 561C1891 559 1894 560 1894 562L1895 573L1898 563C1900 561 1902 563 1901 566L1899 575L1902 570C1904 568 1906 570 1904 573L1899 588z"/>
          <path d="M1877 596L1894 613M1894 596L1877 613M1876 601V595.500H1881M1890 595.500H1895V601M1876 608V613.500H1881"/><circle cx="1895" cy="613" r="6"/><path stroke-width="3.500" d="M1900 618L1906 623"/>
          <path d="M1887 668V648H1884L1890 642L1896 648H1893V668zM1896 652C1907 654 1907 662 1895 664M1884 653C1872 655 1873 663 1885 664"/><path fill="#41474f" d="M1880 661L1886 657V667z"/>
          <path d="M1876.500 694.500H1883.500V702H1876.500zM1886.500 694.500H1893.500V702H1886.500zM1896.500 694.500H1903.500V702H1896.500zM1876.500 705.500H1896V722H1876.500z"/><path fill="#41474f" d="M1882 709V718L1890 713.500z"/>
          <circle cx="1903" cy="739" r="4.500"/><path d="M1900 739H1906"/>
        </g>
      </g>
    </svg>
    <div class="command">
      <div class="grip">
        <svg width="8" height="22" viewBox="0 0 8 22"><path stroke="#bbb" stroke-width="2" stroke-dasharray="2 2.800" d="M1 0V22M6 0V22"/></svg>
        <svg width="12" height="12"><use href="#x"/></svg>
        <svg width="20" height="20" viewBox="0 0 20 20"><path fill="none" stroke="#b8b8b8" stroke-width="3" stroke-linecap="round" d="M2 18L12 8"/><path fill="#b8b8b8" d="M9 7C8 3 12 0 16 1L13 4L15 7L19 5C20 9 16 12 12 10z"/></svg>
      </div>
      <div class="prompt">
        <svg width="20" height="17" viewBox="0 0 20 17"><path fill="#a8a8a8" stroke="#666" d="M.5 .5H19.500V15.500H.5z"/><path fill="#555" d="M0 0H20V4H0z"/><path stroke="#444" fill="none" d="M2 7L5 9L2 11M6 11.500H10"/></svg>
        <i class="caret"></i><span>Type a command</span><i class="up"></i>
      </div>
    </div>
  </main>

  <footer class="bottom">
    <div class="layouts">
      <div class="layout on">Model</div><div class="layout">Layout1</div><div class="layout">Layout2</div><div class="layout plus"><svg width="10" height="10" viewBox="0 0 10 10"><path stroke="#b0b4ba" stroke-width="2.400" d="M5 0V10M0 5H10"/></svg></div>
    </div>
    <div class="status">
      <div class="grp g1">MODEL</div>
      <div class="grp g2"><b><svg class="i" viewBox="0 0 20 20"><path stroke="#fff" d="M5.500 1V19M10.500 1V19M15.500 1V19M1 5.500H19M1 10.500H19M1 15.500H19"/></svg></b><svg class="i" viewBox="0 0 20 20"><path stroke="#d9d9d9" stroke-width="3" stroke-dasharray="3 3" d="M2 4.500H20M2 10.500H20M2 16.500H20"/></svg><i class="caret"></i></div>
      <div class="grp g3"><svg class="i" viewBox="0 0 20 20"><path class="sw" d="M.5 0V19.500H20M.5 13.500H6.500V19"/></svg><svg class="i" viewBox="0 0 20 20"><circle class="sw" cx="8" cy="10" r="7.500"/><path class="sw" d="M20 10.500H8L16 1M13 6V14"/></svg><i class="caret"></i><svg class="i" viewBox="0 0 20 20"><path class="sr" d="M2 1L17 17"/><path stroke="#4fc07a" stroke-width="1.500" d="M10.500 0V18"/><path class="sw" d="M8.500 7.500H12.500V11.500H8.500z"/></svg><i class="caret"></i></div>
      <div class="grp g4"><svg class="i" viewBox="0 0 20 20"><path class="sw" stroke="#aaa" d="M16 2L1 17.500H20" stroke-width="1.500"/><path fill="#fff" d="M6 8H9V11H6z"/></svg><b><svg class="i" viewBox="0 0 20 20"><path fill="none" stroke="#fff" stroke-width="1.300" d="M.5 .5H5.500V5.500H.5zM6 2.500H19.500V19.500H3V6"/></svg></b><i class="caret"></i></div>
      <div class="grp g5"><b><svg class="i" viewBox="0 0 20 20"><path fill="#fff" d="M9 0L12 7V12L18 17V20L11 17H7L0 20V17L6 12V7z"/><circle cx="16" cy="4" r="3.300" fill="none" stroke="#fff"/></svg></b><svg class="i" viewBox="0 0 20 20"><path class="fw" d="M9 0L12 7V12L18 17V20L11 17H7L0 20V17L6 12V7zM16 0L13 5H15L14 9L19 4H16.500z"/></svg><svg class="i" viewBox="0 0 20 20"><path class="fw" d="M9 0L12 7V12L18 17V20L11 17H7L0 20V17L6 12V7z"/></svg><span>1:1</span><i class="caret"></i></div>
      <div class="grp g6"><svg class="i"><use href="#gear"/></svg><i class="caret"></i></div>
      <div class="grp g7"><svg class="i" viewBox="0 0 20 20"><path stroke="#d9d9d9" stroke-width="2.500" d="M10 0V20M0 10H20"/></svg></div>
      <div class="grp g8"><svg class="i" viewBox="0 0 20 20"><path class="sw" d="M1 1.500H8V8H1zM8 12L3.500 19.500H12.500z"/><circle class="sw" cx="15.500" cy="9" r="4"/></svg></div>
      <div class="grp g9"></div>
      <div class="grp g10"><svg class="i" viewBox="0 0 20 20"><path class="sw" d="M.5 3.500H19.500V17.500H.5z"/><path class="sw" stroke-width="1.500" d="M8 10L4 14M12 10L16 6"/><path class="fw" d="M2 11V16H7zM18 5V10L13 5z"/></svg><svg class="i" viewBox="0 0 20 20"><path stroke="#d9d9d9" stroke-width="2.300" d="M0 2H20M0 10H20M0 18H20"/></svg></div>
    </div>
  </footer>
</div>

<div class="taskbar">
  <svg class="t20" viewBox="0 0 20 20"><path fill="#fff" d="M0 3L8.500 1.700V9.300H0zM9.500 1.500L20 0V9.300H9.500zM0 10.500H8.500V18L0 17zM9.500 10.500H20V20L9.500 18.500z"/></svg>
  <svg class="t20" viewBox="0 0 20 20"><circle cx="12.500" cy="7" r="6.500" fill="none" stroke="#fff" stroke-width="1.400"/><path stroke="#fff" stroke-width="1.500" d="M8 12L.5 19.500"/></svg>
  <svg class="t30" viewBox="0 0 30 30"><circle cx="15" cy="15" r="15" fill="#0c78d0"/><path fill="url(#edgeA)" d="M0 13C2 -3 27 -5 30 13C30 19 25 21 20 20C18 19 20 17 20 14C19 7 4 6 0 13z"/><path fill="#10559e" d="M11 16C10 24 18 29 27 24C22 31 12 31 8 26C4 20 7 13 13 12C16 12 18 14 16 14C13 14 11 14 11 16z"/><path fill="#213a42" d="M17 14C14 20 19 24 28 22C24 26 14 25 14 18C14 15 16 14 17 14z"/></svg>
  <svg class="t30" viewBox="0 0 30 30"><path stroke="#aaa" d="M1.500 3.500H28.500V26H1.500z"/><path fill="#bbb" d="M1 3H29V6H1z"/><path fill="#555" d="M2 7H22C12 9 5 14 2 20z"/><path stroke="#eee" d="M4 9.500H8M9 11.500H10M12 11.500H18"/></svg>
  <div class="app"><svg class="t30" viewBox="0 0 30 30"><path fill="#e0a008" d="M1 2H13L15 5V10H1z"/><path fill="#fbd35a" d="M1 7H12L15 4H29V25H1z"/><path fill="#3a94dd" d="M6 26V18Q6 15 9 15H21Q24 15 24 18V26H19V20H11V26z"/></svg></div>
  <div class="app"><svg class="t30" viewBox="0 0 30 30"><circle cx="16" cy="6" r="5" fill="#7b83eb"/><circle cx="25" cy="7" r="3.500" fill="#5059c9"/><path fill="#5059c9" d="M20 12H30V20C30 25 24 25 20 22z"/><path fill="#7b83eb" d="M9 12H23V22C23 30 10 30 9 22z"/><path fill="#4b53bc" d="M0 8H15V23H0z"/><path stroke="#fff" stroke-width="2" d="M4 12H11M7.500 12V20"/><circle cx="24.500" cy="24" r="6" fill="#7fba00" stroke="#fff" stroke-width="1.500"/><path fill="none" stroke="#fff" stroke-width="1.700" d="M21.500 24L24 26.500L28 22"/></svg></div>
  <div class="app"><svg class="t30" viewBox="0 0 30 30"><path fill="#e33b2e" d="M15 15L2.900 8A14 14 0 0 1 27.100 8z"/><path fill="#fcc21b" d="M15 8H27.100A14 14 0 0 1 15 29L21 18z"/><path fill="#229a45" d="M2.900 8A14 14 0 0 0 15 29L21 18L9 18z"/><circle cx="15" cy="15" r="7" fill="#fff"/><circle cx="15" cy="15" r="5.300" fill="#2f7af0"/></svg></div>
  <div class="app cur"><svg class="t30" viewBox="0 0 30 30"><path fill="#fbeee8" d="M0 0H30V30H0z"/><path fill="#f4d3c6" d="M0 0H13L6 18H0z"/><path fill="url(#red)" d="M12 3H18L25 25H19L18 20L12 20.500L9 25H5zM15 9L12.500 16.500L17.500 16z"/></svg></div>
  <svg class="weather" viewBox="0 0 26 20"><circle cx="8" cy="8" r="7.500" fill="#f6b62a"/><path fill="url(#cloud)" d="M5 19A5 5 0 0 1 4 9C6 2 14 1 17 6C22 4 24 8 23 10C27 12 27 19 20 19z"/></svg>
  <span class="temp">68°F</span><span class="sky">Mostly cloudy</span>
  <svg class="t20" viewBox="0 0 20 20"><path fill="none" stroke="#fff" stroke-width="1.500" d="M0 14L8 6L16 14"/></svg>
  <svg class="t20" viewBox="0 0 20 20"><path fill="#fff" d="M5 6H17V14H5z"/><path fill="none" stroke="#fff" d="M7 4.500H18.500V15.500H3.500V10M18.500 8H19.500V12H18.500M1.500 3V5.500M4.500 3V5.500M.5 5.500H5.500V8L3 9.500L.5 8z"/></svg>
  <svg class="t20" viewBox="0 0 20 20"><g fill="none" stroke="#bbb" stroke-width="1.300"><path d="M1 16C1 8 8 2 16 2M5 16C5 10 10 6 16 6M9 16C9 12 12 10 16 10"/></g><circle cx="14" cy="15" r="1.700" fill="#fff"/></svg>
  <svg class="t20" viewBox="0 0 20 20"><path fill="none" stroke="#fff" stroke-width="1.200" d="M1 7H4L8 3V17L4 13H1zM11 7.500C12.500 9 12.500 11 11 12.500"/><path fill="none" stroke="#899" stroke-width="1.200" d="M14 5C17 8 17 12 14 15M17 2.500C21 7 21 13 17 17.500"/></svg>
  <span class="lang">ENG</span>
  <div class="clock"><span>1:42 PM</span><span>4/8/2022</span></div>
  <svg class="t20" viewBox="0 0 20 20"><path fill="none" stroke="#fff" stroke-width="1.300" d="M.7 .7H19.300V16.300H13L10 19.300L7 16.300H.7z"/></svg>
  <i class="edge"></i>
</div>
</div>
</body>
</html>
```
FILE: styles.css
```css
* { box-sizing: border-box; }
body { margin: 0; background: #fff; overflow: hidden; }
.defs { position: absolute; }
.screen { width: 1920px; height: 1080px; overflow: hidden; font: 15px/20px "Open Sans", "Noto Sans", sans-serif; letter-spacing: -.2px; color: #dcdde0; white-space: nowrap; background: linear-gradient(#fff 29px, #0067b5 29px 57px, #fff 57px) 0 0 / 2px 1080px no-repeat #fff; }
.window { display: flex; flex-direction: column; width: 1916px; height: 1030px; margin-left: 2px; border: 1px solid #0c93d8; background: #222933; }

.fw { fill: #d9d9d9; } .fb { fill: #8acaff; } .fy { fill: #ffd37a; } .fc { fill: #62d8e6; }
.sw { stroke: #c8cbd0; fill: none; } .sb { stroke: #6fc0ff; fill: none; } .sy { stroke: #ffd37a; fill: none; } .sc { stroke: #45c8d6; fill: none; } .sr { stroke: #e07078; fill: none; }

svg { display: block; flex: none; overflow: visible; }
.i { width: 20px; height: 20px; }
.caret { display: block; flex: none; width: 10px; height: 5px; background: #dcdde0; clip-path: polygon(0 0, 100% 0, 50% 100%); }
.caret.small { width: 6px; height: 4px; }
.caret.mid { width: 8px; height: 5px; }
.dim { opacity: .4; }
.launch { width: 7px; height: 7px; }

.titlebar { display: grid; grid-template-columns: 25px 29px 30px 30px 30px 30px 31px 29px 30px 28px 17px 29px 13px 227px 21px 26px 161px 181px 216px 13px 228px 30px 27px 106px 20px 28px 28px 19px 12px 30px 96px 29px 30px 14px; height: 35px; padding-left: 10px; align-items: center; }
.workspace { display: flex; align-items: center; width: 223px; height: 26px; padding: 0 2px 0 4px; background: #3b4453; gap: 2px; }
.workspace span { flex: 1; }
.customize { display: flex; width: 11px; height: 9px; border-top: 2px solid #bfc1c5; padding-top: 2px; }
.share { color: #8ecbff; }
.bright { color: #f0f0f0; }
.app-name, .doc-name { padding-bottom: 2px; letter-spacing: -.3px; }
.play { width: 5px; height: 9px; background: #ddd; clip-path: polygon(0 0, 100% 50%, 0 100%); }
.search { width: 223px; height: 26px; padding: 2px 4px; font-size: 14px; letter-spacing: -.3px; font-style: italic; color: #b4b9c3; background: #464f61; }
.divider { width: 1px; height: 22px; background: #4a5464; }
.help { width: 20px; height: 20px; border-radius: 50%; background: #d9d9d9; color: #222933; text-align: center; font-weight: 600; line-height: 20px; }
.min { width: 10px; height: 3px; margin-top: 7px; background: #e4e4e4; }
.max { width: 15px; height: 14px; margin-bottom: 4px; border: 1px solid #eee; border-top-width: 3px; }
.close { width: 14px; height: 14px; margin-bottom: 4px; }

.menu { display: grid; grid-template-columns: 81px 58px 74px 60px 82px 94px 60px 86px 56px 78px 70px 76px 102px 112px 134px 24px 6px; height: 25px; margin: 3px 0 0 7px; align-items: center; color: #a9adb4; }
.menu a { padding-bottom: 2px; }
.menu .on { width: 68px; height: 25px; padding: 2px 0 0 11px; background: #3b4453; color: #f0f0f0; line-height: 20px; }
.minimize { display: grid; place-items: center; width: 19px; height: 9px; background: #eee; }
.minimize i { width: 7px; height: 4px; background: #555; clip-path: polygon(50% 0, 100% 100%, 0 100%); }

.ribbon { display: flex; width: 1906px; height: 124px; margin-left: 4px; background: #3b4453; color: #eceded; }
.panel { border-right: 1px solid #222933; flex: none; }
.panel:last-child { border: 0; }
.body { display: flex; height: 102px; align-items: flex-start; }
.panel h2 { display: flex; align-items: center; gap: 8px; height: 20px; margin: 0; font-size: 15px; font-weight: 400; }
.panel h2 .caret, .panel h2 .launch { margin-top: 2px; }
.big { display: flex; flex-direction: column; align-items: center; padding-top: 9px; text-align: center; }
.big svg { width: 40px; height: 40px; }
.big span { margin-top: 4px; }
.big.tight { padding-top: 8px; }
.big .caret { margin-top: 5px; }
.tools { display: grid; grid-template-rows: repeat(3, 20px); row-gap: 11px; padding-top: 10px; align-items: center; }
.tools .small { margin-top: -1px; }
.combo { display: flex; align-items: center; height: 28px; border: 1px solid #262d38; background: #4e596c; padding: 0 4px 0 3px; gap: 3px; }
.combo span { flex: 1; }
.active { background: #466080; border: 1px solid #6fc0ff; }

.p-modeling { width: 234px; } .p-modeling .body { padding-left: 9px; } .p-modeling h2 { padding-left: 77px; }
.p-modeling .big + .big { margin-left: 20px; width: 50px; }
.wide { display: grid; gap: 11px; padding: 11px 0 0 19px; }
.wide div { display: flex; gap: 6px; align-items: center; }
.p-mesh { width: 97px; } .p-mesh .big { width: 62px; margin: 0 4px 0 1px; } .p-mesh h2 { padding-left: 23px; gap: 24px; }
.p-solid { width: 118px; } .p-solid .tools { grid-template-columns: 35px 32px 30px 6px; padding-left: 7px; } .p-solid h2 { padding-left: 7px; }
.p-draw { width: 117px; } .p-draw .tools { grid-template-columns: 30px 34px 32px 6px; padding-left: 7px; } .p-draw h2 { padding-left: 33px; gap: 6px; }
.p-modify { width: 181px; } .p-modify .tools { grid-template-columns: 35px 30px 35px 30px 30px 6px; padding-left: 6px; } .p-modify h2 { padding-left: 58px; gap: 7px; }
.p-section { width: 95px; } .p-section .big { width: 94px; } .p-section h2 { padding-left: 6px; gap: 7px; } .p-section .launch { margin-left: 3px; }
.p-coords { width: 181px; } .p-coords .tools { grid-template-columns: 27px 22px 35px 30px 30px 20px; padding-left: 7px; } .p-coords .combo { grid-column: 3 / 7; width: 125px; margin: 0 0 2px -4px; padding-right: 2px; } .p-coords .combo span { padding-left: 0; } .p-coords .combo { gap: 2px; } .p-coords h2 { padding-left: 42px; gap: 43px; }
.p-view { width: 160px; } .p-view .body { flex-direction: column; align-items: stretch; gap: 3px; padding: 7px 3px 0 2px; } .p-view h2 { padding-left: 54px; }
.p-view .combo { gap: 2px; }
.p-view .row { display: flex; align-items: center; gap: 7px; padding: 2px 0 0 4px; }
.p-selection { width: 214px; } .p-selection .body { padding-left: 2px; } .p-selection h2 { padding-left: 76px; }
.p-selection .active { width: 53px; height: 89px; margin-top: 6px; padding-top: 2px; }
.p-selection .active + .big { width: 66px; margin-left: 10px; }
.gizmo { display: flex; align-items: center; gap: 3px; margin-left: 22px; }
.gizmo .big { width: 44px; }
.gizmo > .caret { margin-top: 60px; }
.p-layers { width: 341px; } .p-layers .big { width: 77px; } .p-layers h2 { padding-left: 142px; }
.layer-col { padding-top: 6px; }
.layer-col .combo { width: 260px; padding: 0 1px 1px 7px; gap: 6px; }
.layer-col .combo span { padding-left: 1px; }
.bulb { width: 14px; height: 20px; }
.swatch { width: 18px; height: 18px; background: #ffbf00; border: 1px solid #c9c9c9; }
.layer-col .combo .i { margin-right: -1px; } .layer-col .combo .i + .i { margin-right: 0; }
.layer-col .tools { grid-template: 20px 20px / repeat(5, 30px); padding: 7px 0 0 4px; }
.p-groups { width: 85px; } .p-groups .big { width: 52px; align-items: flex-start; padding-left: 5px; } .p-groups h2 { padding-left: 9px; gap: 7px; }
.p-groups .tools { padding-left: 3px; } .p-groups .tools b { width: 29px; height: 27px; margin: -1px 0 0 -4px; padding: 3px 0 0 4px; }
.p-base { width: 83px; } .p-base .big { width: 78px; } .p-base h2 { padding-left: 6px; } .p-base .launch { margin-left: 2px; }
.p-base .big .caret { margin-top: 3px; }

.files { display: flex; height: 32px; padding: 5px 0 0 17px; color: #a9adb4; border: 0; }
.file { display: flex; align-items: center; height: 27px; background: #313845; flex: none; }
.file span { flex: 1; }
.file svg { width: 12px; height: 12px; margin-bottom: 2px; }
.file.on { background: #3b4453; color: #fff; font-weight: 700; letter-spacing: -.45px; }
.f1 { width: 168px; padding-left: 25px; clip-path: path("M0 27C10 26 12 20 14 10Q16 0 26 0H155Q165 0 168 14V27z"); }
.f2 { width: 184px; padding: 0 17px 0 12px; letter-spacing: -.6px; clip-path: path("M0 14Q2 0 12 0H170Q178 0 184 17V27H6Q0 24 0 14z"); }
.f3 { width: 153px; padding: 0 16px 0 12px; clip-path: path("M0 14Q2 0 12 0H140Q150 0 153 17V27H0z"); }
.f4 { width: 162px; padding: 0 24px 0 13px; clip-path: path("M0 14Q2 0 12 0H142Q150 0 153 12Q156 24 162 27H10Q0 24 0 14z"); }
.file.add { width: 26px; height: 19px; margin: 5px 0 0 1px; justify-content: center; clip-path: path("M0 0H15Q24 4 26 19H10Q3 14 0 0z"); }
.add svg { width: 10px; height: 10px; margin: 0; }

.canvas { position: relative; width: 1908px; height: 770px; margin-left: 3px; border-top: 6px solid #3b4453; border-bottom: 1px solid #4a4f57; background: #212830; flex: none; }
.drawing { width: 1908px; height: 764px; overflow: hidden; }
.ui { fill: #eee; font-size: 15px; letter-spacing: 0; }
.dims path { stroke: #0b6f12; stroke-width: 1.3; }
.dims .tip { fill: #0a8a10; stroke: none; }
.dims text { font: 21px "Liberation Sans", Arial, sans-serif; fill: #0a8210; letter-spacing: 0; }
.bars { fill: none; stroke: #0f0; stroke-width: 1.2; }
.bars .shade { fill: #078a0c; stroke: none; }
.cross path, .ucs path { fill: none; stroke: #e8e8e8; stroke-width: 1; }
.ucs path { stroke-width: 1.3; }
.mdi path { fill: none; stroke: #fff; stroke-width: 2.4; }
.cube text { font: 700 23px "Liberation Sans", Arial, sans-serif; fill: #b2b4b7; text-anchor: middle; letter-spacing: 0; }
.cube .top { font-size: 16px; fill: #50565e; }
.cube .pill { font: 12.5px "DejaVu Sans", sans-serif; fill: #555963; text-anchor: start; }
.command { position: absolute; left: 382px; top: 730px; display: flex; width: 1144px; height: 34px; }
.grip { display: flex; align-items: center; gap: 5px; width: 70px; padding-left: 5px; background: #2b303d; }
.grip svg + svg + svg { margin-left: 10px; }
.grip svg { margin-bottom: 2px; }
.prompt { display: flex; align-items: center; width: 1074px; height: 32px; margin-top: 1px; padding: 0 5px; border-radius: 2px; background: linear-gradient(transparent 21px, rgba(230, 140, 140, .45) 21px 22px, transparent 22px) #bfc0c2; color: #5f6266; }
.prompt .caret { background: #555; margin-left: 2px; }
.prompt span { flex: 1; padding-left: 8px; font: italic 14.8px/20px "DejaVu Sans Mono", monospace; letter-spacing: 0; }
.up { width: 10px; height: 5px; background: #555; clip-path: polygon(50% 0, 100% 100%, 0 100%); }

.bottom { display: flex; justify-content: space-between; height: 38px; }
.layouts { display: flex; padding-left: 15px; color: #a9adb4; }
.layout { width: 84px; height: 23px; margin-right: -3px; padding: 1px 0 0 13px; background: #313845; clip-path: path("M0 0Q5 1 7 12Q9 23 15 23H69Q75 23 77 12Q79 1 84 0z"); }
.layout.on { width: 80px; padding-left: 17px; background: #3b4453; color: #fff; font-weight: 700; letter-spacing: -.5px; }
.layout.on + .layout { margin-left: -1px; }
.layout.plus { width: 28px; height: 19px; margin: 3px 0 0 5px; padding: 5px 0 0 9px; clip-path: path("M6 0H28Q26 19 16 19H0Q0 4 6 0z"); }
.status { display: flex; padding: 2px 5px 0 0; }
.grp { display: flex; align-items: center; height: 30px; background: #3b4453; flex: none; color: #f4f4f4; }
.grp b { display: grid; place-items: center; width: 29px; height: 28px; background: #5f8dc0; }
.g1 { width: 59px; margin-right: 3px; padding-left: 4px; letter-spacing: -.35px; }
.g2 { width: 80px; margin-right: 3px; } .g2 > .i { margin: 0 10px 0 6px; }
.g3 { width: 130px; margin-right: 1px; padding-left: 5px; gap: 10px; } .g3 .caret + .i { margin: 0 0 0 -1px; }
.g4 { width: 80px; margin-right: 3px; padding-left: 5px; gap: 5px; }
.g5 { width: 132px; margin-right: 3px; } .g5 > .i { margin-left: 6px; } .g5 > .i + .i { margin-left: 10px; } .g5 span { margin: 0 5px 0 10px; letter-spacing: -.6px; width: 17px; }
.g6 { width: 50px; margin-right: 1px; padding-left: 5px; gap: 10px; }
.g7 { width: 30px; margin-right: 3px; padding-left: 4px; }
.g8 { width: 30px; margin-right: 3px; padding-left: 4px; }
.g9 { width: 4px; margin-right: 3px; }
.g10 { width: 60px; padding-left: 5px; gap: 10px; }

.taskbar { display: grid; grid-template-columns: 60px 59px 61px 53px 62px 62px 57px 962px 38px 46px 132px 28px 32px 28px 33px 48px 88px 45px 1px; height: 50px; padding-left: 20px; align-items: center; color: #fff; background: linear-gradient(90deg, #223c42 0, #20343f 55%, #1b2742 88%, #1b2540 100%); }
.t20 { width: 20px; height: 20px; }
.t30 { width: 30px; height: 30px; }
.app { display: grid; place-items: center; width: 51px; height: 50px; border-bottom: 3px solid #76b9ed; padding: 3px 1px 0 0; }
.cur { width: 61px; padding: 3px 2px 0 0; background: linear-gradient(90deg, #506169 56px, #27383e 56px 57px, #435054 57px); }
.weather { width: 26px; height: 20px; }
.temp, .sky { font-size: 17px; letter-spacing: 0; padding-top: 2px; }
.temp { letter-spacing: -.3px; }
.lang { letter-spacing: -.4px; padding-top: 1px; }
.clock { display: grid; justify-items: center; width: 62px; row-gap: 3px; font-size: 14px; letter-spacing: -.1px; justify-self: start; }
.edge { width: 1px; height: 50px; background: #6a7282; }
```
